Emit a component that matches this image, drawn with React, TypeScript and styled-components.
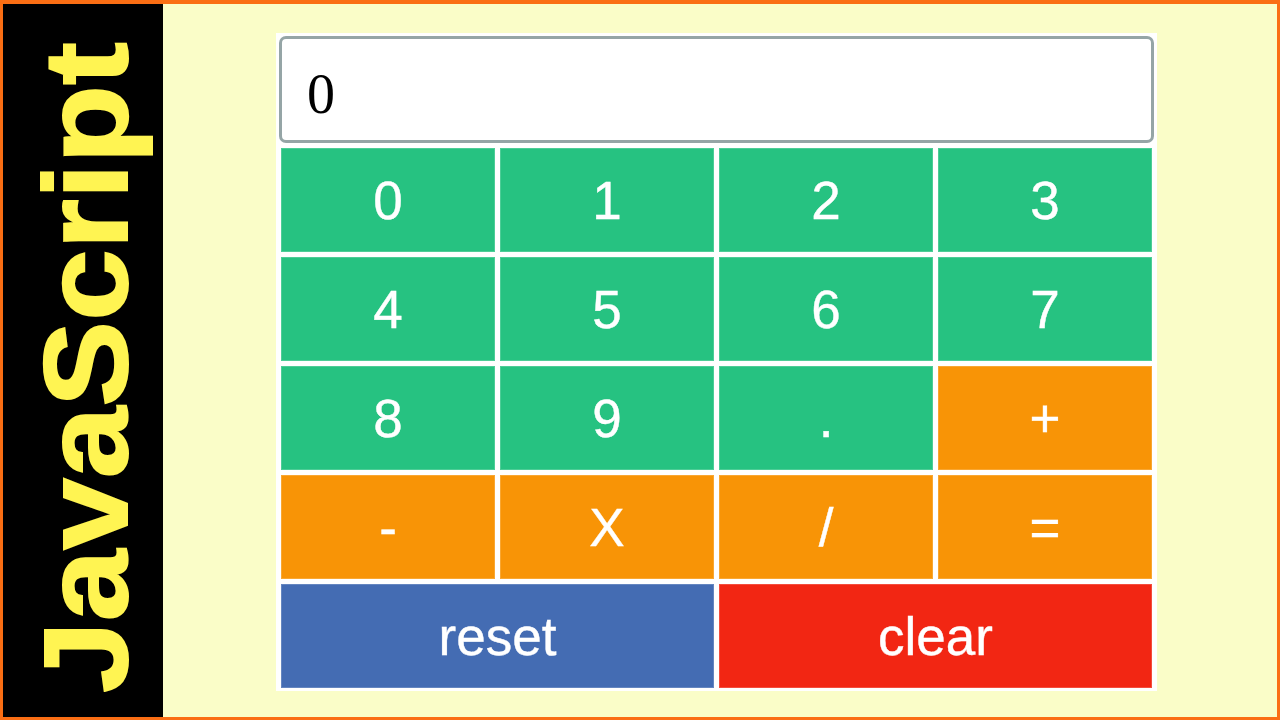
import React from "react";
import styled, { createGlobalStyle } from "styled-components";

const GlobalStyle = createGlobalStyle`
  html, body {
    margin: 0;
    padding: 0;
  }
  * {
    box-sizing: border-box;
  }
`;

const Pagina = styled.div`
  width: 1280px;
  height: 720px;
  display: flex;
  border: 3px solid #fa6e14;
  border-top-width: 4px;
  background-color: #fafdc8;
  overflow: hidden;
`;

const BarraLateral = styled.aside`
  width: 160px;
  flex-shrink: 0;
  background-color: #000;
  display: flex;
  align-items: center;
  justify-content: center;
  padding: 14px 0 0 6px;
`;

const TituloVertical = styled.h1`
  margin: 0;
  writing-mode: vertical-rl;
  transform: rotate(180deg) scaleY(1.09);
  font-family: "Liberation Sans", Arial, sans-serif;
  font-weight: 700;
  font-size: 118px;
  line-height: 1;
  color: #fff452;
  -webkit-text-stroke: 2px #fff452;
  white-space: nowrap;
`;

const AreaPrincipal = styled.main`
  flex: 1;
  padding: 29px 0 0 113px;
`;

const Calculadora = styled.div`
  width: 881px;
  background-color: #fff;
  padding: 3px;
  display: flex;
  flex-direction: column;
  gap: 5px;
`;

const Visor = styled.div`
  height: 107px;
  border: 3px solid #95a5a6;
  border-radius: 7px;
  display: flex;
  align-items: center;
  padding: 8px 0 0 25px;
  font-family: "Liberation Serif", "Times New Roman", serif;
  font-size: 56px;
  color: #000;
`;

const Teclado = styled.div`
  display: grid;
  grid-template-columns: repeat(4, 1fr);
  grid-auto-rows: 104px;
  column-gap: 5px;
  row-gap: 5px;
  padding: 0 2px;
`;

const cores: Record<string, string> = {
  numero: "#26c281",
  operador: "#f89406",
  reset: "#446cb3",
  limpar: "#f22613",
};

const Tecla = styled.button<{ $tipo: string; $largura?: number }>`
  grid-column: span ${(p) => p.$largura ?? 1};
  border: 1px solid rgba(255, 255, 255, 0.18);
  margin: 0;
  padding: 0;
  background-color: ${(p) => cores[p.$tipo]};
  color: #fff;
  font-family: "Liberation Sans", Arial, sans-serif;
  font-size: 53px;
  -webkit-text-stroke: 0.4px #fff;
  cursor: pointer;
`;

const teclas = [
  { rotulo: "0", tipo: "numero" },
  { rotulo: "1", tipo: "numero" },
  { rotulo: "2", tipo: "numero" },
  { rotulo: "3", tipo: "numero" },
  { rotulo: "4", tipo: "numero" },
  { rotulo: "5", tipo: "numero" },
  { rotulo: "6", tipo: "numero" },
  { rotulo: "7", tipo: "numero" },
  { rotulo: "8", tipo: "numero" },
  { rotulo: "9", tipo: "numero" },
  { rotulo: ".", tipo: "numero" },
  { rotulo: "+", tipo: "operador" },
  { rotulo: "-", tipo: "operador" },
  { rotulo: "X", tipo: "operador" },
  { rotulo: "/", tipo: "operador" },
  { rotulo: "=", tipo: "operador" },
  { rotulo: "reset", tipo: "reset", largura: 2 },
  { rotulo: "clear", tipo: "limpar", largura: 2 },
];

export default function App() {
  return (
    <>
      <GlobalStyle />
      <Pagina>
        <BarraLateral>
          <TituloVertical>JavaScript</TituloVertical>
        </BarraLateral>
        <AreaPrincipal>
          <Calculadora>
            <Visor>0</Visor>
            <Teclado>
              {teclas.map((t) => (
                <Tecla key={t.rotulo} $tipo={t.tipo} $largura={t.largura}>
                  {t.rotulo}
                </Tecla>
              ))}
            </Teclado>
          </Calculadora>
        </AreaPrincipal>
      </Pagina>
    </>
  );
}
